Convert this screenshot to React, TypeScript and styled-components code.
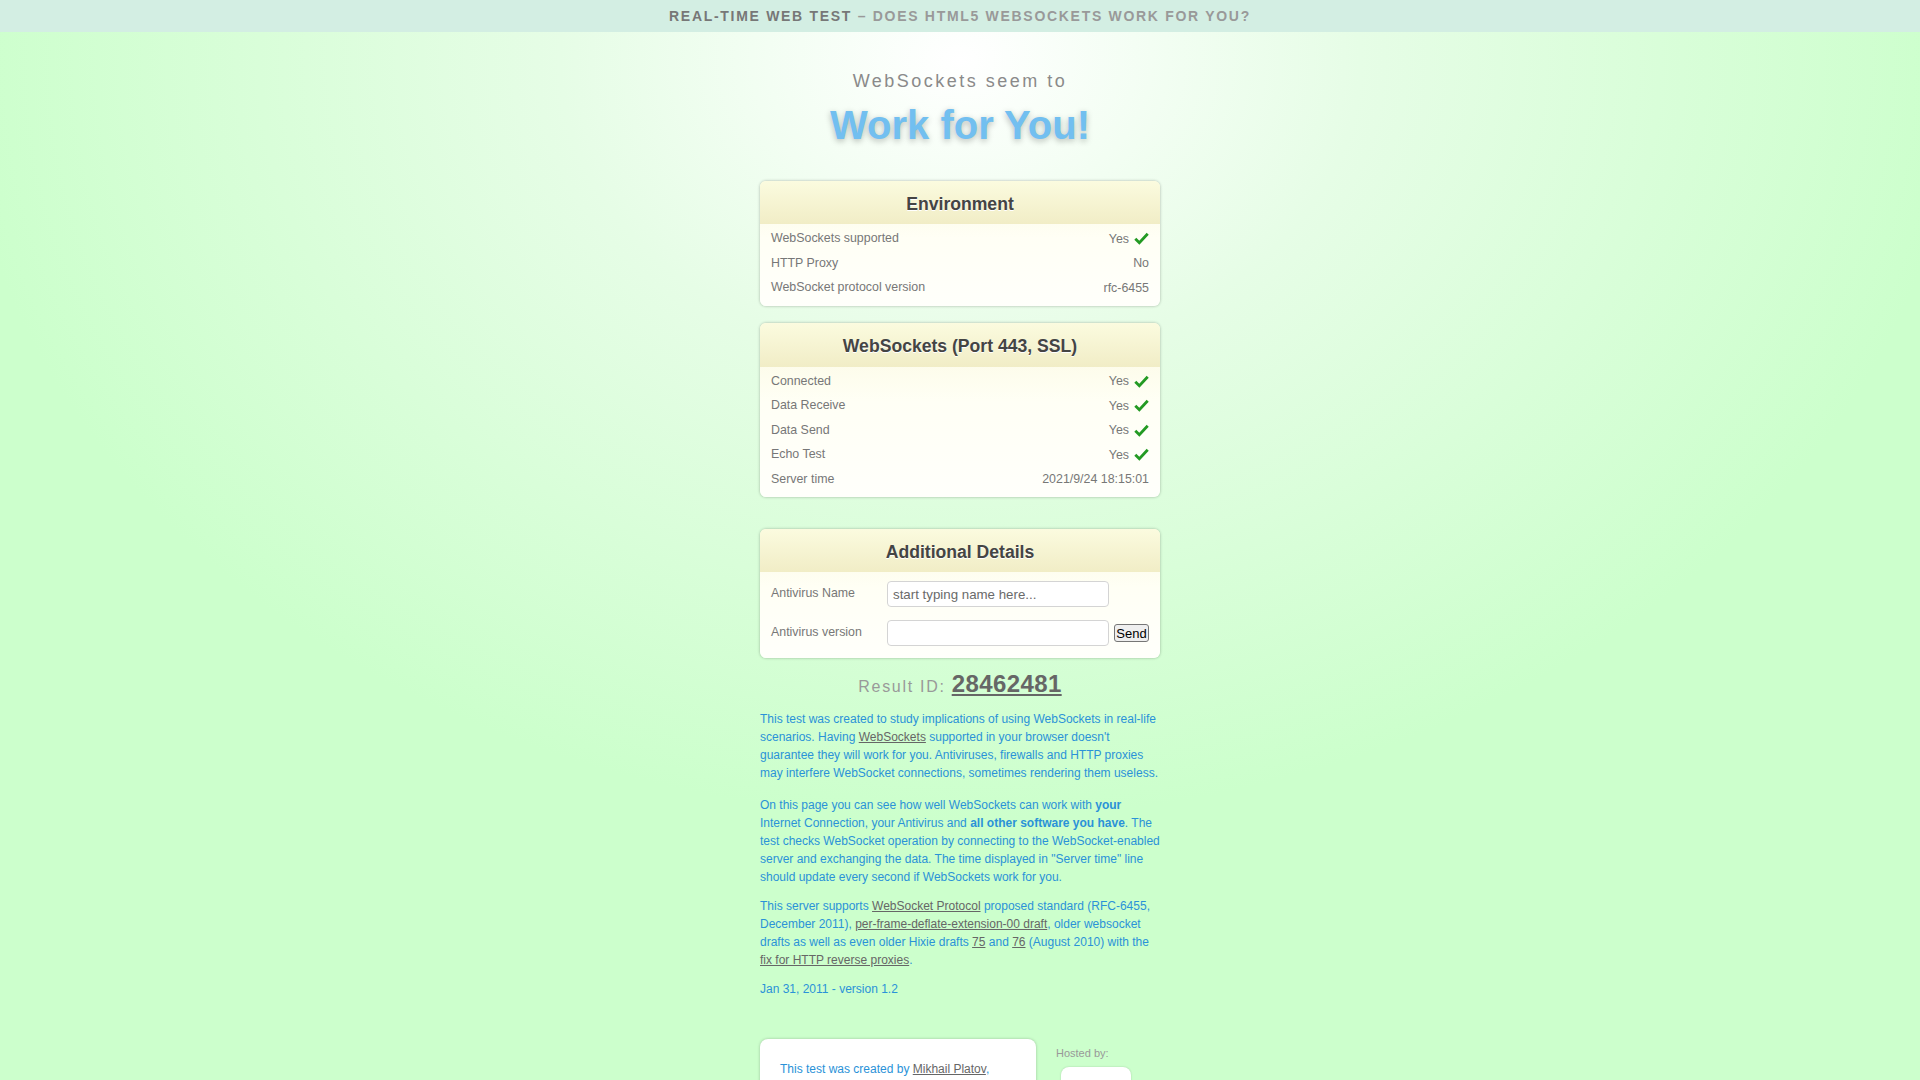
import React from 'react';
import styled, { createGlobalStyle } from 'styled-components';

const GlobalStyle = createGlobalStyle`
  html, body {
    margin: 0;
    padding: 0;
  }
  body {
    min-height: 1080px;
    font-family: "Liberation Sans", Arial, sans-serif;
    background: radial-gradient(ellipse 1000px 760px at 50% 60px, #ffffff 0%, #e6fde6 40%, #ccffcc 100%) no-repeat, #ccffcc;
  }
`;

const TopBar = styled.div`
  height: 32px;
  line-height: 32px;
  background: #d3eee3;
  text-align: center;
  font-size: 14px;
  font-weight: bold;
  letter-spacing: 1.7px;
  text-transform: uppercase;
  color: #999;
`;

const TopBarStrong = styled.span`
  color: #777;
`;

const Column = styled.div`
  width: 400px;
  margin: 0 auto;
  display: flex;
  flex-direction: column;
`;

const Seem = styled.div`
  margin-top: 38px;
  text-align: center;
  font-size: 18px;
  line-height: 22px;
  letter-spacing: 2.5px;
  color: #8a8a8a;
`;

const Verdict = styled.h1`
  margin: 9px 0 0;
  text-align: center;
  font-size: 40px;
  line-height: 48px;
  font-weight: bold;
  color: #72bff0;
  text-shadow: 0 2px 6px rgba(0, 0, 0, 0.28);
`;

const Card = styled.section<{ $gap: number }>`
  margin-top: ${p => p.$gap}px;
  border-radius: 6px;
  overflow: hidden;
  box-shadow: 0 0 3px rgba(0, 0, 0, 0.3);
  background: linear-gradient(to bottom, #fbf9df 0%, #fffff5 45%, #fffffb 100%);
`;

const CardHeader = styled.h2<{ $h: number }>`
  margin: 0;
  box-sizing: border-box;
  height: ${p => p.$h}px;
  padding-top: 3px;
  line-height: ${p => p.$h - 3}px;
  text-align: center;
  font-size: 17.6px;
  font-weight: bold;
  color: #444;
  text-shadow: 0 1px 0 #fff;
  background: linear-gradient(to bottom, #fbfbdf 0%, #f1edc6 100%);
`;

const CardBody = styled.div`
  padding: 2px 11px 6px;
`;

const Row = styled.div`
  height: 24.5px;
  display: flex;
  align-items: center;
  justify-content: space-between;
  font-size: 12.4px;
  color: #777;
`;

const RowValue = styled.span`
  display: flex;
  align-items: center;
  gap: 5px;
  margin-top: 1px;
`;

const FormBody = styled.div`
  padding: 9px 11px 12px;
  display: flex;
  flex-direction: column;
  gap: 13px;
`;

const FormRow = styled.div`
  height: 26px;
  display: flex;
  align-items: center;
  font-size: 12.4px;
  color: #777;
`;

const FormLabel = styled.label`
  width: 116px;
  margin-top: -2px;
`;

const TextInput = styled.input`
  box-sizing: border-box;
  width: 222px;
  height: 26px;
  padding: 0 5px;
  border: 1px solid #d4d4d4;
  border-radius: 4px;
  background: #fff;
  font-family: "Liberation Sans", Arial, sans-serif;
  font-size: 13.3px;
  color: #333;
  &::placeholder {
    color: #6a6a6a;
  }
`;

const SendButton = styled.button`
  box-sizing: border-box;
  margin-left: 5px;
  width: 35px;
  height: 18px;
  padding: 0;
  border: 1px solid #767676;
  border-radius: 3px;
  background: #efefef;
  font-family: "Liberation Sans", Arial, sans-serif;
  font-size: 13px;
  color: #000;
`;

const Result = styled.div`
  margin-top: 11px;
  text-align: center;
  line-height: 30px;
  font-size: 16px;
  letter-spacing: 1.7px;
  color: #999;
`;

const ResultId = styled.a`
  font-size: 24px;
  font-weight: bold;
  letter-spacing: 0.4px;
  color: #666;
  text-decoration: underline;
`;

const Para = styled.p<{ $gap: number }>`
  margin: ${p => p.$gap}px 0 0;
  font-size: 12px;
  line-height: 18px;
  color: #2a92d8;
`;

const Link = styled.a`
  color: #666;
  text-decoration: underline;
`;

const Footer = styled.div`
  margin-top: 41px;
  display: flex;
  gap: 20px;
  align-items: flex-start;
`;

const AuthorCard = styled.div`
  width: 276px;
  height: 80px;
  box-sizing: border-box;
  padding: 22px 20px;
  border-radius: 8px;
  background: #fff;
  box-shadow: 0 0 3px rgba(0, 0, 0, 0.25);
  font-size: 12px;
  line-height: 16px;
  color: #2a92d8;
`;

const Hosted = styled.div`
  padding-top: 8px;
  font-size: 11px;
  color: #999;
`;

const HostLogo = styled.div`
  margin: 8px 0 0 5px;
  width: 70px;
  height: 40px;
  border-radius: 8px;
  background: #fff;
  box-shadow: 0 0 2px rgba(0, 0, 0, 0.2);
`;

const Check = () => (
  <svg width="15" height="13" viewBox="0 0 14 12">
    <path d="M1.2 6.2 L5 10 L12.8 1.6" fill="none" stroke="#239a23" strokeWidth="2.6" />
  </svg>
);

const envRows: [string, string, boolean][] = [
  ['WebSockets supported', 'Yes', true],
  ['HTTP Proxy', 'No', false],
  ['WebSocket protocol version', 'rfc-6455', false]
];

const sslRows: [string, string, boolean][] = [
  ['Connected', 'Yes', true],
  ['Data Receive', 'Yes', true],
  ['Data Send', 'Yes', true],
  ['Echo Test', 'Yes', true],
  ['Server time', '2021/9/24 18:15:01', false]
];

const StatusRows = ({ rows }: { rows: [string, string, boolean][] }) => (
  <CardBody>
    {rows.map(([label, value, ok]) => (
      <Row key={label}>
        <span>{label}</span>
        <RowValue>
          {value}
          {ok && <Check />}
        </RowValue>
      </Row>
    ))}
  </CardBody>
);

export default function App() {
  return (
    <>
      <GlobalStyle />
      <TopBar>
        <TopBarStrong>Real-time web test</TopBarStrong> – Does HTML5 WebSockets work for you?
      </TopBar>
      <Column>
        <Seem>WebSockets seem to</Seem>
        <Verdict>Work for You!</Verdict>

        <Card $gap={32}>
          <CardHeader $h={43}>Environment</CardHeader>
          <StatusRows rows={envRows} />
        </Card>

        <Card $gap={17}>
          <CardHeader $h={44}>WebSockets (Port 443, SSL)</CardHeader>
          <StatusRows rows={sslRows} />
        </Card>

        <Card $gap={32}>
          <CardHeader $h={43}>Additional Details</CardHeader>
          <FormBody>
            <FormRow>
              <FormLabel>Antivirus Name</FormLabel>
              <TextInput placeholder="start typing name here..." />
            </FormRow>
            <FormRow>
              <FormLabel>Antivirus version</FormLabel>
              <TextInput />
              <SendButton>Send</SendButton>
            </FormRow>
          </FormBody>
        </Card>

        <Result>
          Result ID: <ResultId href="#">28462481</ResultId>
        </Result>

        <Para $gap={8}>
          This test was created to study implications of using WebSockets in real-life scenarios. Having{' '}
          <Link href="#">WebSockets</Link> supported in your browser doesn't guarantee they will work for you.
          Antiviruses, firewalls and HTTP proxies may interfere WebSocket connections, sometimes rendering them
          useless.
        </Para>
        <Para $gap={13.5}>
          On this page you can see how well WebSockets can work with <b>your</b> Internet Connection, your Antivirus
          and <b>all other software you have</b>. The test checks WebSocket operation by connecting to the
          WebSocket-enabled server and exchanging the data. The time displayed in "Server time" line should update
          every second if WebSockets work for you.
        </Para>
        <Para $gap={11}>
          This server supports <Link href="#">WebSocket Protocol</Link> proposed standard (RFC-6455, December 2011),{' '}
          <Link href="#">per-frame-deflate-extension-00 draft</Link>, older websocket drafts as well as even older
          Hixie drafts <Link href="#">75</Link> and <Link href="#">76</Link> (August 2010) with the{' '}
          <Link href="#">fix for HTTP reverse proxies</Link>.
        </Para>
        <Para $gap={11}>Jan 31, 2011 - version 1.2</Para>

        <Footer>
          <AuthorCard>
            This test was created by <Link href="#">Mikhail Platov</Link>,
          </AuthorCard>
          <div>
            <Hosted>Hosted by:</Hosted>
            <HostLogo />
          </div>
        </Footer>
      </Column>
    </>
  );
}
